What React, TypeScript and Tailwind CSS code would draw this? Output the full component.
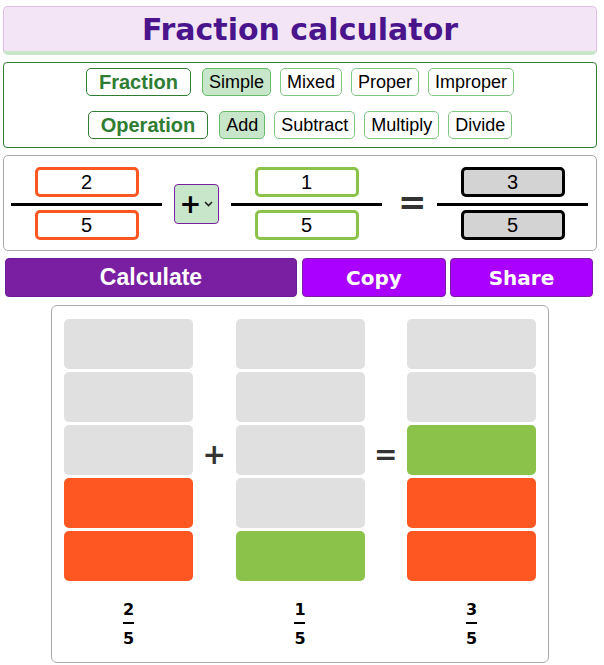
import React from "react";

const FRACTION_TYPES = [
  { label: "Simple", on: true },
  { label: "Mixed", on: false },
  { label: "Proper", on: false },
  { label: "Improper", on: false },
];

const OPERATIONS = [
  { label: "Add", on: true },
  { label: "Subtract", on: false },
  { label: "Multiply", on: false },
  { label: "Divide", on: false },
];

const GRAY = "bg-[#e0e0e0]";
const ORANGE = "bg-[#ff5722]";
const GREEN = "bg-[#8bc34a]";

// five slices per column, top to bottom
const COLUMNS = [
  { num: 2, den: 5, cells: [GRAY, GRAY, GRAY, ORANGE, ORANGE] },
  { num: 1, den: 5, cells: [GRAY, GRAY, GRAY, GRAY, GREEN] },
  { num: 3, den: 5, cells: [GRAY, GRAY, GREEN, ORANGE, ORANGE] },
];

function OptionRow({ title, items }: { title: string; items: { label: string; on: boolean }[] }) {
  return (
    <div className="flex h-[28px] items-stretch justify-center gap-[9px]">
      <span className="mr-[2px] flex items-center rounded-[5px] border border-[#2e7d32] px-[12px] text-[20px] font-bold text-[#2e7d32]">
        {title}
      </span>
      {items.map((it) => (
        <button
          key={it.label}
          className={
            "flex items-center rounded-[5px] border px-[6px] pt-[1px] text-[18px] text-black " +
            (it.on ? "border-[#66bb6a] bg-[#c8e6c9]" : "border-[#81c784] bg-white")
          }
        >
          {it.label}
        </button>
      ))}
    </div>
  );
}

function FractionInput({ num, den, box }: { num: number; den: number; box: string }) {
  const cls =
    "mx-auto block h-[30px] w-[104px] rounded-[5px] border-[3px] text-center text-[20px] leading-none text-black outline-none " +
    box;
  return (
    <div className="flex w-[151px] flex-col">
      <input readOnly value={num} className={cls} />
      <div className="mt-[6px] h-[3px] w-full bg-black" />
      <input readOnly value={den} className={"mt-[4px] " + cls} />
    </div>
  );
}

export default function App() {
  return (
    <div className="min-h-[665px] w-[604px] bg-white font-['Liberation_Sans',Arial,sans-serif]">
      <div className="ml-[3px] w-[594px] pt-[6px]">
        <header className="flex h-[49px] items-center justify-center rounded-[5px] border border-b-[4px] border-[#e1bee7] border-b-[#c8e6c9] bg-[#f3e5f5]">
          <h1 className="pt-[2px] font-['DejaVu_Sans',Verdana,sans-serif] text-[30px] font-bold leading-none text-[#4a148c]">
            Fraction calculator
          </h1>
        </header>

        {/* options */}
        <div className="mt-[7px] flex flex-col gap-[15px] rounded-[4px] border border-[#2e7d32] pb-[8px] pt-[5px]">
          <OptionRow title="Fraction" items={FRACTION_TYPES} />
          <OptionRow title="Operation" items={OPERATIONS} />
        </div>

        {/* inputs */}
        <div className="mt-[7px] flex items-center rounded-[5px] border border-[#aaaaaa] pb-[10px] pl-[7px] pt-[11px]">
          <FractionInput num={2} den={5} box="border-[#ff5722] bg-white" />
          <div className="ml-[12px] flex h-[40px] w-[45px] items-center justify-center gap-[3px] rounded-[4px] border border-[#7b1fa2] bg-[#c8e6c9]">
            <span className="font-['DejaVu_Sans',Verdana,sans-serif] text-[26px] font-bold leading-none text-black">+</span>
            <svg width="9" height="6" viewBox="0 0 9 6" className="mt-[1px]">
              <path d="M1 1l3.5 3.5L8 1" fill="none" stroke="#222" strokeWidth="1.6" />
            </svg>
          </div>
          <div className="ml-[12px]">
            <FractionInput num={1} den={5} box="border-[#8bc34a] bg-white" />
          </div>
          <span className="ml-[16px] w-[23px] pb-[3px] text-center font-['DejaVu_Sans',Verdana,sans-serif] text-[34px] font-bold leading-none text-[#333]">
            =
          </span>
          <div className="ml-[16px]">
            <FractionInput num={3} den={5} box="border-black bg-[#d3d3d3]" />
          </div>
        </div>

        {/* actions */}
        <div className="mt-[7px] flex pl-[2px]">
          <button className="h-[39px] w-[292px] rounded-[4px] border border-[#6a1b9a] bg-[#7b1fa2] text-[23px] font-bold text-white">
            Calculate
          </button>
          <button className="ml-[5px] h-[39px] w-[144px] rounded-[4px] border border-[#7b1fa2] bg-[#aa00ff] font-['DejaVu_Sans',Verdana,sans-serif] text-[20px] font-bold text-white">
            Copy
          </button>
          <button className="ml-[4px] h-[39px] w-[143px] rounded-[4px] border border-[#7b1fa2] bg-[#aa00ff] font-['DejaVu_Sans',Verdana,sans-serif] text-[20px] font-bold text-white">
            Share
          </button>
        </div>

        {/* visual */}
        <div className="ml-[48px] mt-[8px] w-[498px] rounded-[6px] border border-[#aaaaaa] px-[12px] pb-[15px] pt-[13px]">
          <div className="grid grid-cols-[129px_1fr_129px_1fr_129px]">
            {COLUMNS.map((col, i) => (
              <React.Fragment key={i}>
                {i > 0 && (
                  <div className="flex items-center justify-center pt-[10px] font-['DejaVu_Sans',Verdana,sans-serif] text-[28px] font-bold leading-none text-[#333]">
                    {i === 1 ? "+" : "="}
                  </div>
                )}
                <div className="flex flex-col gap-[3px]">
                  {col.cells.map((c, j) => (
                    <div key={j} className={"h-[50px] rounded-[5px] " + c} />
                  ))}
                </div>
              </React.Fragment>
            ))}
          </div>
          <div className="mt-[21px] grid grid-cols-[129px_1fr_129px_1fr_129px]">
            {COLUMNS.map((col, i) => (
              <React.Fragment key={i}>
                {i > 0 && <div />}
                <div className="flex justify-center">
                  <div className="flex flex-col items-center font-['DejaVu_Sans',Verdana,sans-serif] text-[16px] font-bold leading-[16px] text-black">
                    <span>{col.num}</span>
                    <span className="mt-[4px] h-[2px] w-[11px] bg-black" />
                    <span className="mt-[7px]">{col.den}</span>
                  </div>
                </div>
              </React.Fragment>
            ))}
          </div>
        </div>
      </div>
    </div>
  );
}
